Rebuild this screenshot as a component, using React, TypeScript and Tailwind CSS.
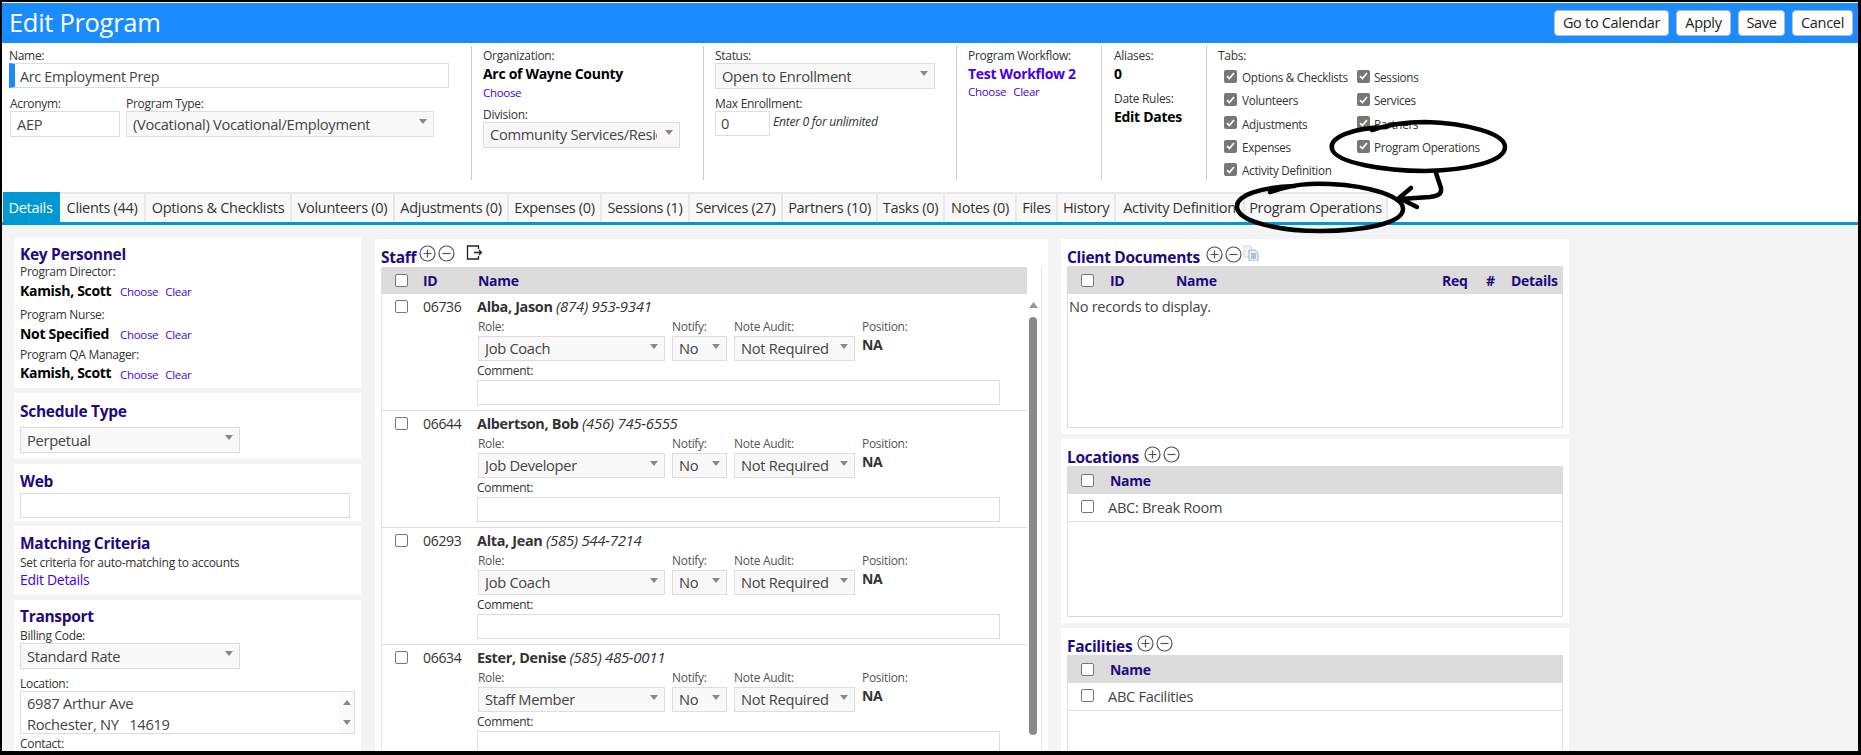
import { ReactNode } from "react";

const tabs = [
  { label: "Details", width: "w-[57px]" },
  { label: "Clients (44)", width: "w-[86px]" },
  { label: "Options & Checklists", width: "w-[146px]" },
  { label: "Volunteers (0)", width: "w-[103px]" },
  { label: "Adjustments (0)", width: "w-[114px]" },
  { label: "Expenses (0)", width: "w-[93px]" },
  { label: "Sessions (1)", width: "w-[88px]" },
  { label: "Services (27)", width: "w-[93px]" },
  { label: "Partners (10)", width: "w-[95px]" },
  { label: "Tasks (0)", width: "w-[67px]" },
  { label: "Notes (0)", width: "w-[72px]" },
  { label: "Files", width: "w-[41px]" },
  { label: "History", width: "w-[58px]" },
  { label: "Activity Definition", width: "w-[129px]" },
  { label: "Program Operations", width: "w-[143px]" },
];

const staff = [
  { id: "06736", name: "Alba, Jason", phone: "(874) 953-9341", role: "Job Coach" },
  { id: "06644", name: "Albertson, Bob", phone: "(456) 745-6555", role: "Job Developer" },
  { id: "06293", name: "Alta, Jean", phone: "(585) 544-7214", role: "Job Coach" },
  { id: "06634", name: "Ester, Denise", phone: "(585) 485-0011", role: "Staff Member" },
];

const tabChecks = [
  ["Options & Checklists", "Volunteers", "Adjustments", "Expenses", "Activity Definition"],
  ["Sessions", "Services", "Partners", "Program Operations"],
];

function Caret() {
  return (
    <svg width="8" height="5" viewBox="0 0 8 5" className="shrink-0">
      <path d="M0 0h8L4 5z" fill="#888" />
    </svg>
  );
}

function Select({ value, className }: { value: string; className: string }) {
  return (
    <div
      className={`flex items-center justify-between overflow-hidden whitespace-nowrap border border-[#ddd] bg-[#f8f8f8] pl-[6px] pr-[6px] text-[14.7px] text-[#444] ${className}`}
    >
      <span className="overflow-hidden">{value}</span>
      <span className="mb-[5px] ml-2">
        <Caret />
      </span>
    </div>
  );
}

function Box({ className = "" }: { className?: string }) {
  return (
    <span
      className={`block h-[13px] w-[13px] shrink-0 rounded-[2px] border border-[#777] bg-white ${className}`}
    />
  );
}

function CheckedBox() {
  return (
    <span className="flex h-[13px] w-[13px] shrink-0 items-center justify-center rounded-[2px] bg-[#777]">
      <svg width="9" height="8" viewBox="0 0 9 8">
        <path d="M1 4.2 3.4 6.6 8 1" fill="none" stroke="#fff" strokeWidth="1.7" />
      </svg>
    </span>
  );
}

function Label({ children, className = "" }: { children: ReactNode; className?: string }) {
  return <div className={`text-[12px] leading-[14px] text-[#333] ${className}`}>{children}</div>;
}

function Link({ children, className = "" }: { children: ReactNode; className?: string }) {
  return <span className={`text-[#4400ee] ${className}`}>{children}</span>;
}

function Heading({ children, className = "" }: { children: ReactNode; className?: string }) {
  return <div className={`text-[15.5px] font-bold leading-[20px] text-[#1f0a80] ${className}`}>{children}</div>;
}

function Card({ children, className = "" }: { children: ReactNode; className?: string }) {
  return <div className={`shrink-0 bg-white ${className}`}>{children}</div>;
}

function PlusMinus() {
  return (
    <span className="flex gap-[2px]">
      <svg width="17" height="17" viewBox="0 0 17 17">
        <circle cx="8.5" cy="8.5" r="7.5" fill="none" stroke="#555" strokeWidth="1.2" />
        <path d="M8.5 4.5v8M4.5 8.5h8" stroke="#555" strokeWidth="1.2" />
      </svg>
      <svg width="17" height="17" viewBox="0 0 17 17">
        <circle cx="8.5" cy="8.5" r="7.5" fill="none" stroke="#555" strokeWidth="1.2" />
        <path d="M4.5 8.5h8" stroke="#555" strokeWidth="1.2" />
      </svg>
    </span>
  );
}

function Person({ label, name, nameWidth }: { label: string; name: string; nameWidth: string }) {
  return (
    <div>
      <Label>{label}</Label>
      <div className="mt-[2px] flex items-center">
        <span className={`text-[14px] font-bold leading-[18px] text-black ${nameWidth}`}>{name}</span>
        <span className="mt-[2px] text-[11.5px]">
          <Link>Choose</Link>
          <Link className="ml-[7px]">Clear</Link>
        </span>
      </div>
    </div>
  );
}

function StaffRow({ person }: { person: (typeof staff)[number] }) {
  return (
    <div className="flex h-[117px] border-b border-[#ddd] pt-[2px]">
      <div className="ml-[13px] mt-[4px] w-[13px] shrink-0">
        <Box />
      </div>
      <div className="ml-[15px] mt-px w-[54px] shrink-0 text-[14px] leading-[20px] text-[#333]">{person.id}</div>
      <div className="min-w-0 flex-1">
        <div className="text-[14.4px] leading-[20px] text-[#333]">
          <span className="font-bold">{person.name}</span> <i className="text-[15px]">{person.phone}</i>
        </div>
        <div className="mt-[3px] flex text-[#555]">
          <div className="ml-px w-[194px]">
            <Label className="text-[#555]">Role:</Label>
            <Select value={person.role} className="mt-[2px] h-[25px] w-[187px]" />
          </div>
          <div className="w-[62px]">
            <Label className="text-[#555]">Notify:</Label>
            <Select value="No" className="mt-[2px] h-[25px] w-[55px]" />
          </div>
          <div className="w-[128px]">
            <Label className="text-[#555]">Note Audit:</Label>
            <Select value="Not Required" className="mt-[2px] h-[25px] w-[121px]" />
          </div>
          <div>
            <Label className="text-[#555]">Position:</Label>
            <div className="mt-[1px] text-[14px] font-bold leading-[20px] text-[#333]">NA</div>
          </div>
        </div>
        <Label className="mt-[3px]">Comment:</Label>
        <div className="mt-[2px] h-[25px] w-[523px] border border-[#ddd] bg-white" />
      </div>
    </div>
  );
}

function NameTable({ row, className }: { row: string; className: string }) {
  return (
    <div className={`mx-[6px] border-x border-b border-[#ddd] ${className}`}>
      <div className="flex h-[28px] items-center bg-[#dcdcdc] pl-[13px]">
        <Box />
        <span className="ml-[16px] text-[14px] font-bold text-[#1f0a80]">Name</span>
      </div>
      <div className="flex h-[28px] items-center border-b border-[#ddd] pl-[13px]">
        <Box className="mb-[2px]" />
        <span className="ml-[14px] text-[14.6px] text-[#444]">{row}</span>
      </div>
    </div>
  );
}

export default function App() {
  return (
    <div className="relative flex h-[755px] w-[1861px] flex-col overflow-hidden border-t-2 border-r-[3px] border-b-[4px] border-l-2 border-black bg-white pt-px font-['Open_Sans',sans-serif] text-[13px] tracking-[-0.3px]">
      <header className="flex h-[40px] shrink-0 items-center justify-between bg-[#1a8cff] pr-[5px] pl-[7px]">
        <h1 className="text-[25.5px] leading-none text-white">Edit Program</h1>
        <div className="flex gap-[7px]">
          {[
            { label: "Go to Calendar", width: "w-[115px]" },
            { label: "Apply", width: "w-[55px]" },
            { label: "Save", width: "w-[47px]" },
            { label: "Cancel", width: "w-[61px]" },
          ].map((b) => (
            <button
              key={b.label}
              className={`h-[26px] rounded-[4px] border border-[#bbb] bg-white text-[14.5px] text-[#222] ${b.width}`}
            >
              {b.label}
            </button>
          ))}
        </div>
      </header>

      <section className="flex h-[149px] shrink-0 pt-[3px]">
        <div className="h-[134px] w-[470px] border-r border-[#ccc] pt-[3px] pl-[7px]">
          <Label>Name:</Label>
          <div className="flex h-[25px] w-[440px] items-center border border-[#ddd] border-l-[6px] border-l-[#1a8cff] pt-[2px] pl-[5px] text-[14.3px] text-[#444]">
            Arc Employment Prep
          </div>
          <div className="mt-[9px] flex">
            <div className="ml-px w-[116px]">
              <Label>Acronym:</Label>
              <div className="flex h-[26px] w-[110px] items-center border border-[#ddd] pl-[6px] text-[14.7px] text-[#444]">AEP</div>
            </div>
            <div>
              <Label>Program Type:</Label>
              <Select value="(Vocational) Vocational/Employment" className="h-[26px] w-[308px]" />
            </div>
          </div>
        </div>

        <div className="h-[134px] w-[232px] border-r border-[#ccc] pt-[3px] pl-[11px]">
          <Label>Organization:</Label>
          <div className="mt-[2px] text-[14px] font-bold leading-[18px] text-black">Arc of Wayne County</div>
          <Link className="text-[11.5px] leading-[17px]">Choose</Link>
          <Label className="mt-[5px]">Division:</Label>
          <Select value="Community Services/Residential" className="h-[26px] w-[197px]" />
        </div>

        <div className="h-[134px] w-[253px] border-r border-[#ccc] pt-[3px] pl-[11px]">
          <Label>Status:</Label>
          <Select value="Open to Enrollment" className="h-[26px] w-[220px]" />
          <Label className="mt-[8px]">Max Enrollment:</Label>
          <div className="flex items-center">
            <div className="flex h-[25px] w-[55px] items-center border border-[#ddd] pl-[5px] text-[14.7px] text-[#444]">0</div>
            <i className="mb-[2px] ml-[3px] text-[12.2px] text-[#333]">Enter 0 for unlimited</i>
          </div>
        </div>

        <div className="h-[134px] w-[145px] border-r border-[#ccc] pt-[3px] pl-[11px]">
          <Label>Program Workflow:</Label>
          <div className="mt-[2px] text-[14px] font-bold leading-[18px] text-[#4400ee]">Test Workflow 2</div>
          <div className="text-[11.5px] leading-[18px]">
            <Link>Choose</Link>
            <Link className="ml-[7px]">Clear</Link>
          </div>
        </div>

        <div className="h-[134px] w-[105px] border-r border-[#ccc] pt-[3px] pl-[12px]">
          <Label>Aliases:</Label>
          <div className="mt-[2px] text-[14px] font-bold leading-[18px] text-black">0</div>
          <Label className="mt-[9px]">Date Rules:</Label>
          <div className="mt-[2px] text-[14px] font-bold leading-[18px] text-black">Edit Dates</div>
        </div>

        <div className="pt-[3px] pl-[11px]">
          <Label>Tabs:</Label>
          <div className="mt-[3px] flex">
            {tabChecks.map((col, i) => (
              <div key={i} className={i === 0 ? "ml-[6px] w-[133px]" : ""}>
                {col.map((item) => (
                  <div key={item} className="flex h-[23.4px] items-center">
                    <span className="mb-[3px]">
                      <CheckedBox />
                    </span>
                    <span className={`text-[11.7px] text-[#333] ${i === 0 ? "ml-[5px]" : "ml-[4px]"}`}>{item}</span>
                  </div>
                ))}
              </div>
            ))}
          </div>
        </div>
      </section>

      <nav className="flex h-[30px] shrink-0 pl-px">
        {tabs.map((tab, i) => (
          <div
            key={tab.label}
            className={`flex shrink-0 items-center justify-center whitespace-nowrap border-t-2 border-r-2 text-[14.5px] ${tab.width} ${
              i === 0
                ? "border-[#0099d6] bg-[#0099d6] text-white"
                : "border-[#e8e8e8] bg-[#f8f8f8] text-[#333]"
            }`}
          >
            {tab.label}
          </div>
        ))}
      </nav>
      <div className="h-[3px] shrink-0 bg-[#0099d6]" />

      <main className="flex min-h-0 flex-1 bg-[#f4f4f4]">
        <div className="ml-[12px] flex w-[347px] shrink-0 flex-col pt-[13px]">
          <Card className="h-[150px] px-[6px] pt-[6px]">
            <Heading>Key Personnel</Heading>
            <div className="mt-px">
              <Person label="Program Director:" name="Kamish, Scott" nameWidth="w-[100px]" />
            </div>
            <div className="mt-[8px]">
              <Person label="Program Nurse:" name="Not Specified" nameWidth="w-[100px]" />
            </div>
            <div className="mt-[4px]">
              <Person label="Program QA Manager:" name="Kamish, Scott" nameWidth="w-[100px]" />
            </div>
          </Card>
          <Card className="mt-[5px] h-[65px] px-[6px] pt-[8px]">
            <Heading>Schedule Type</Heading>
            <Select value="Perpetual" className="mt-[6px] h-[26px] w-[220px]" />
          </Card>
          <Card className="mt-[6px] h-[57px] px-[6px] pt-[7px]">
            <Heading>Web</Heading>
            <div className="mt-[2px] h-[25px] w-[330px] border border-[#ddd]" />
          </Card>
          <Card className="mt-[5px] h-[68px] px-[6px] pt-[7px]">
            <Heading>Matching Criteria</Heading>
            <Label className="mt-[3px] text-[#222]">Set criteria for auto-matching to accounts</Label>
            <Link className="text-[14px] leading-[20px]">Edit Details</Link>
          </Card>
          <Card className="mt-[6px] min-h-0 flex-1 px-[6px] pt-[6px]">
            <Heading>Transport</Heading>
            <Label className="mt-[3px]">Billing Code:</Label>
            <Select value="Standard Rate" className="h-[26px] w-[220px]" />
            <Label className="mt-[8px]">Location:</Label>
            <div className="flex h-[43px] w-[335px] border border-[#ddd] pl-[6px] text-[14.7px] leading-[21px] text-[#444]">
              <div className="flex-1 pt-px">
                6987 Arthur Ave
                <br />
                Rochester, NY &nbsp; 14619
              </div>
              <div className="flex w-[15px] flex-col items-center justify-between bg-[#fafafa] py-[8px]">
                <svg width="8" height="5" viewBox="0 0 8 5">
                  <path d="M0 5h8L4 0z" fill="#888" />
                </svg>
                <Caret />
              </div>
            </div>
            <Label className="mt-[3px]">Contact:</Label>
          </Card>
        </div>

        <Card className="mt-[14px] ml-[14px] w-[673px] self-stretch overflow-hidden px-[6px]">
          <div className="flex h-[28px] items-start">
            <Heading className="mt-[8px]">Staff</Heading>
            <span className="mt-[6px] ml-[3px] flex">
              <PlusMinus />
            </span>
            <svg width="17" height="15" viewBox="0 0 17 15" className="mt-[6px] ml-[11px]">
              <path d="M12.5 4V1H1.5v13h11v-3M8 7.5h7.5M13 5l2.5 2.5L13 10" fill="none" stroke="#222" strokeWidth="1.3" />
            </svg>
          </div>
          <div className="relative h-[500px] w-[661px] border-x border-[#e4e4e4]">
            <div className="flex h-[27px] w-[645px] items-center bg-[#dcdcdc] pl-[13px] text-[14px] font-bold text-[#1f0a80]">
              <Box />
              <span className="ml-[15px] w-[55px]">ID</span>
              <span>Name</span>
            </div>
            <div className="w-[645px]">
              {staff.map((person) => (
                <StaffRow key={person.id} person={person} />
              ))}
            </div>
            <div className="absolute top-[35px] right-[4px] flex w-[8px] flex-col items-center">
              <svg width="9" height="6" viewBox="0 0 9 6">
                <path d="M0 6h9L4.5 0z" fill="#999" />
              </svg>
              <div className="mt-[9px] h-[418px] w-[8px] rounded-[4px] bg-[#8a8a8a]" />
            </div>
          </div>
        </Card>

        <div className="ml-[13px] flex w-[508px] shrink-0 flex-col pt-[14px]">
          <Card className="h-[195px]">
            <div className="flex h-[27px] px-[6px]">
              <Heading className="mt-[8px]">Client Documents</Heading>
              <span className="mt-[7px] ml-[6px]">
                <PlusMinus />
              </span>
              <svg width="16" height="16" viewBox="0 0 16 16" className="mt-[6px] ml-[1px]">
                <path d="M1 1h6l2 2v9H1z" fill="#f1f4f8" stroke="#cfd6df" />
                <path d="M6 5h6l3 3v8H6z" fill="#e4edf7" stroke="#9db5cf" />
                <path d="M8 9h5M8 11h5M8 13h5" stroke="#6f9bd0" />
              </svg>
            </div>
            <div className="mx-[6px] h-[162px] border-x border-b border-[#ddd]">
              <div className="flex h-[28px] items-center bg-[#dcdcdc] pl-[13px] text-[14px] font-bold text-[#1f0a80]">
                <Box />
                <span className="ml-[16px] w-[66px]">ID</span>
                <span className="w-[266px]">Name</span>
                <span className="w-[44px]">Req</span>
                <span className="w-[25px]">#</span>
                <span>Details</span>
              </div>
              <div className="mt-[2px] pl-px text-[14.6px] text-[#444]">No records to display.</div>
            </div>
          </Card>

          <Card className="mt-[5px] h-[184px]">
            <div className="flex h-[27px] px-[6px]">
              <Heading className="mt-[8px]">Locations</Heading>
              <span className="mt-[7px] ml-[5px]">
                <PlusMinus />
              </span>
            </div>
            <NameTable row="ABC: Break Room" className="h-[151px]" />
          </Card>

          <Card className="mt-[5px] min-h-0 flex-1">
            <div className="flex h-[27px] px-[6px]">
              <Heading className="mt-[8px]">Facilities</Heading>
              <span className="mt-[7px] ml-[5px]">
                <PlusMinus />
              </span>
            </div>
            <NameTable row="ABC Facilities" className="h-[151px]" />
          </Card>
        </div>
      </main>

      {/* hand drawn annotation over the page, coords are relative to the bordered box */}
      <svg className="pointer-events-none absolute top-[-2px] left-[-2px]" width="1861" height="755" fill="none" stroke="#000" strokeWidth="4.5" strokeLinecap="round" strokeLinejoin="round">
        <path d="M1386 127C1350 128 1329 138 1332 149 1336 163 1385 171 1425 171 1470 170 1505 161 1505 147 1505 133 1465 123 1425 122 1405 122 1390 124 1372 130" />
        <path d="M1295 186C1262 187 1236 195 1237 207 1238 222 1280 231 1320 231 1365 231 1403 223 1403 209 1403 196 1370 186 1330 184 1310 183 1295 184 1270 192" />
        <path d="M1436 173 1441 188C1442 194 1438 196 1430 197L1400 199M1411 188 1399 198 1417 207" />
      </svg>
    </div>
  );
}
